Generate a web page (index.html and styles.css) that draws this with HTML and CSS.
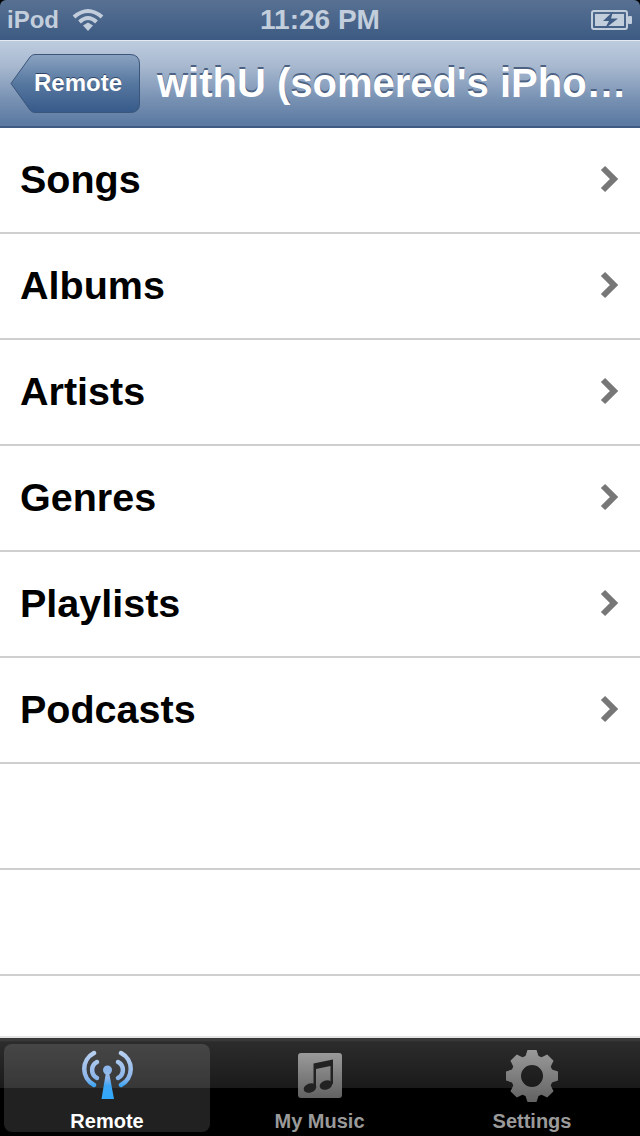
FILE: index.html
```html
<!DOCTYPE html>
<html lang="en">
<head>
  <meta charset="UTF-8">
  <meta name="viewport" content="width=device-width, initial-scale=1.0">
  <title>Remote</title>
  <link rel="stylesheet" href="styles.css">
</head>
<body>
  <div class="screen">
    <div class="status-bar">
      <div class="status-left">
        <span>iPod</span>
        <svg class="wifi" width="32" height="24" viewBox="0 0 32 24">
          <path d="M2 9 Q16 -3 30 9" />
          <path d="M7.5 14 Q16 6 24.500 14" />
          <polygon class="wifi-dot" points="16,23 11,17.500 16,14.500 21,17.500" />
        </svg>
      </div>
      <div class="status-time">11:26 PM</div>
      <div class="status-right">
        <svg width="42" height="20" viewBox="0 0 42 20">
          <rect class="batt-shell" x="1" y="1" width="35" height="18" rx="2" />
          <rect class="batt-fill" x="4" y="4" width="29" height="12" />
          <rect class="batt-tip" x="37" y="6" width="4" height="8" rx="1" />
          <polygon class="batt-bolt" points="22,1.500 12,11 18,11 14,18.500 27,8.500 20,8.500" />
        </svg>
      </div>
    </div>

    <div class="nav-bar">
      <a class="back-btn">
        <svg class="back-shape" width="130" height="60" viewBox="0 0 130 60">
          <defs>
            <linearGradient id="backFill" x1="0" y1="0" x2="0" y2="1">
              <stop offset="0" stop-color="#8ba3c2" />
              <stop offset="0.5" stop-color="#56779f" />
              <stop offset="1" stop-color="#365a8a" />
            </linearGradient>
          </defs>
          <path d="M1 29.500 L20 3 Q22 0.500 25 0.500 H120 Q129.500 0.500 129.500 10 V50 Q129.500 58.500 120 58.500 H25 Q22 58.500 20 56 Z" />
        </svg>
        <span class="back-label">Remote</span>
      </a>
      <h1 class="nav-title">withU (somered's iPho…</h1>
    </div>

    <ul class="list">
      <li class="row">Songs<svg class="chevron" width="20" height="28" viewBox="0 0 20 28"><path d="M4 3 L15 14 L4 25" /></svg></li>
      <li class="row">Albums<svg class="chevron" width="20" height="28" viewBox="0 0 20 28"><path d="M4 3 L15 14 L4 25" /></svg></li>
      <li class="row">Artists<svg class="chevron" width="20" height="28" viewBox="0 0 20 28"><path d="M4 3 L15 14 L4 25" /></svg></li>
      <li class="row">Genres<svg class="chevron" width="20" height="28" viewBox="0 0 20 28"><path d="M4 3 L15 14 L4 25" /></svg></li>
      <li class="row">Playlists<svg class="chevron" width="20" height="28" viewBox="0 0 20 28"><path d="M4 3 L15 14 L4 25" /></svg></li>
      <li class="row">Podcasts<svg class="chevron" width="20" height="28" viewBox="0 0 20 28"><path d="M4 3 L15 14 L4 25" /></svg></li>
      <li class="row"></li>
      <li class="row"></li>
      <li class="row"></li>
    </ul>

    <div class="tab-bar">
      <div class="tab active">
        <svg class="tab-icon" width="56" height="52" viewBox="-1 0 56 52">
          <defs>
            <linearGradient id="waveFill" gradientUnits="userSpaceOnUse" x1="0" y1="2" x2="0" y2="50">
              <stop offset="0" stop-color="#b8d0f0" />
              <stop offset="0.55" stop-color="#8db6ea" />
              <stop offset="0.7" stop-color="#3ea6f5" />
              <stop offset="1" stop-color="#2fa8fb" />
            </linearGradient>
          </defs>
          <g class="waves">
            <path d="M14 3 A18 18 0 0 0 14 35" />
            <path d="M17 12 A9 9 0 0 0 17 28" />
            <path d="M41 3 A18 18 0 0 1 41 35" />
            <path d="M38 12 A9 9 0 0 1 38 28" />
          </g>
          <circle cx="27.500" cy="20" r="4.500" fill="#8db6ea" />
          <polygon points="26,22 29,22 34,49 21.500,49" fill="url(#waveFill)" />
        </svg>
        <span class="tab-label">Remote</span>
      </div>
      <div class="tab">
        <svg class="tab-icon" width="44" height="52" viewBox="0 0 44 52">
          <defs>
            <linearGradient id="greyFill" x1="0" y1="0" x2="0" y2="1">
              <stop offset="0" stop-color="#9a9a9a" />
              <stop offset="1" stop-color="#626262" />
            </linearGradient>
          </defs>
          <g transform="translate(0 3)">
            <rect width="44" height="45" rx="3" fill="url(#greyFill)" />
            <path fill="#222" d="M15.500 34 V10.500 L35 6.500 V31 H32.500 V13 L18 16 V35 Z" />
            <ellipse cx="12" cy="35" rx="6.500" ry="4.500" transform="rotate(-20 12 35)" fill="#222" />
            <ellipse cx="28" cy="32" rx="6.500" ry="4.500" transform="rotate(-20 28 32)" fill="#222" />
          </g>
        </svg>
        <span class="tab-label">My Music</span>
      </div>
      <div class="tab">
        <svg class="tab-icon" width="52" height="52" viewBox="0 0 52 52">
          <path fill="url(#greyFill)" fill-rule="evenodd" d="M19.500 6 L21.500 0 H30.500 L32.500 6 L35.550 7.260 L41.200 4.430 L47.570 10.800 L44.740 16.450 L46 19.500 L52 21.500 V30.500 L46 32.500 L44.740 35.550 L47.570 41.200 L41.200 47.570 L35.550 44.740 L32.500 46 L30.500 52 H21.500 L19.500 46 L16.450 44.740 L10.800 47.570 L4.430 41.200 L7.260 35.550 L6 32.500 L0 30.500 V21.500 L6 19.500 L7.260 16.450 L4.430 10.800 L10.800 4.430 L16.450 7.260 Z M37 26 A11 11 0 1 0 15 26 A11 11 0 1 0 37 26 Z" />
        </svg>
        <span class="tab-label">Settings</span>
      </div>
    </div>
  </div>
</body>
</html>
```

FILE: styles.css
```css
* {
  box-sizing: border-box;
}
body {
  margin: 0;
  background: #000;
  font-family: 'Liberation Sans', Arial, sans-serif;
}
.screen {
  width: 640px;
  height: 1136px;
  display: flex;
  flex-direction: column;
  overflow: hidden;
}

/* status bar */
.status-bar {
  height: 40px;
  flex: none;
  display: grid;
  grid-template-columns: 1fr auto 1fr;
  align-items: center;
  padding: 0 7px;
  background: linear-gradient(to bottom, #587193, #3c5a83);
  border-radius: 6px 6px 0 0;
  color: #c3cedc;
  font-size: 24px;
  font-weight: bold;
}
.status-left {
  display: flex;
  align-items: center;
  gap: 13px;
}
.status-time {
  font-size: 28px;
}
.status-right {
  display: flex;
  justify-content: flex-end;
}
.wifi path {
  fill: none;
  stroke: #c3cedc;
  stroke-width: 4;
}
.wifi-dot {
  fill: #c3cedc;
}
.batt-shell {
  fill: none;
  stroke: #c3cedc;
  stroke-width: 2;
}
.batt-fill,
.batt-tip {
  fill: #c3cedc;
}
.batt-bolt {
  fill: #3f5d85;
}

/* nav bar */
.nav-bar {
  height: 88px;
  flex: none;
  display: flex;
  align-items: center;
  gap: 17px;
  padding-left: 10px;
  background: linear-gradient(to bottom, #bdcbde 1px, #a7b8cf 30%, #7690b2 70%, #5c7aa2 97%);
  border-top: 1px solid #e6ebf2;
  border-bottom: 2px solid #3f5b83;
}
.back-btn {
  position: relative;
  width: 130px;
  height: 60px;
  flex: none;
  display: flex;
  align-items: center;
  justify-content: center;
  padding: 0 8px 1px 14px;
}
.back-shape {
  position: absolute;
  top: 0;
  left: 0;
}
.back-shape path {
  fill: url(#backFill);
  stroke: #3c557a;
  stroke-width: 1;
}
.back-label {
  position: relative;
  color: #fff;
  font-size: 24px;
  font-weight: bold;
  text-shadow: 0 -1px 0 #2f4566;
}
.nav-title {
  margin: 0;
  color: #fff;
  font-size: 40px;
  font-weight: bold;
  white-space: nowrap;
  text-shadow: 0 -2px 0 #4d6282;
}

/* list */
.list {
  flex: 1;
  min-height: 0;
  margin: 0;
  padding: 0;
  list-style: none;
  overflow: hidden;
  background: #fff;
  border-bottom: 2px solid #e4e4e4;
}
.row {
  height: 106px;
  display: flex;
  align-items: center;
  justify-content: space-between;
  padding: 0 21px 2px 20px;
  border-bottom: 2px solid #cfcfcf;
  color: #000;
  font-size: 39.500px;
  font-weight: bold;
}
.chevron path {
  fill: none;
  stroke: #777;
  stroke-width: 6;
}

/* tab bar */
.tab-bar {
  height: 98px;
  flex: none;
  display: flex;
  gap: 6.500px;
  padding: 6px 5px 4px 4px;
  background: linear-gradient(to bottom, #333 0, #3d3d3d 2px, #2c2c2c 4px, #1a1a1a 50px, #000 50px);
}
.tab {
  flex: 1;
  display: flex;
  flex-direction: column;
  align-items: center;
  border-radius: 8px;
  padding-top: 6px;
}
.tab.active {
  background: rgba(255, 255, 255, 0.13);
}
.tab-icon {
  flex: none;
}
.tab-label {
  margin-top: 7px;
  color: #9a9a9a;
  font-size: 20px;
  line-height: 24px;
  font-weight: bold;
}
.active .tab-label {
  color: #fff;
}
.waves path {
  fill: none;
  stroke: url(#waveFill);
  stroke-width: 4.500;
  stroke-linecap: round;
}
```
